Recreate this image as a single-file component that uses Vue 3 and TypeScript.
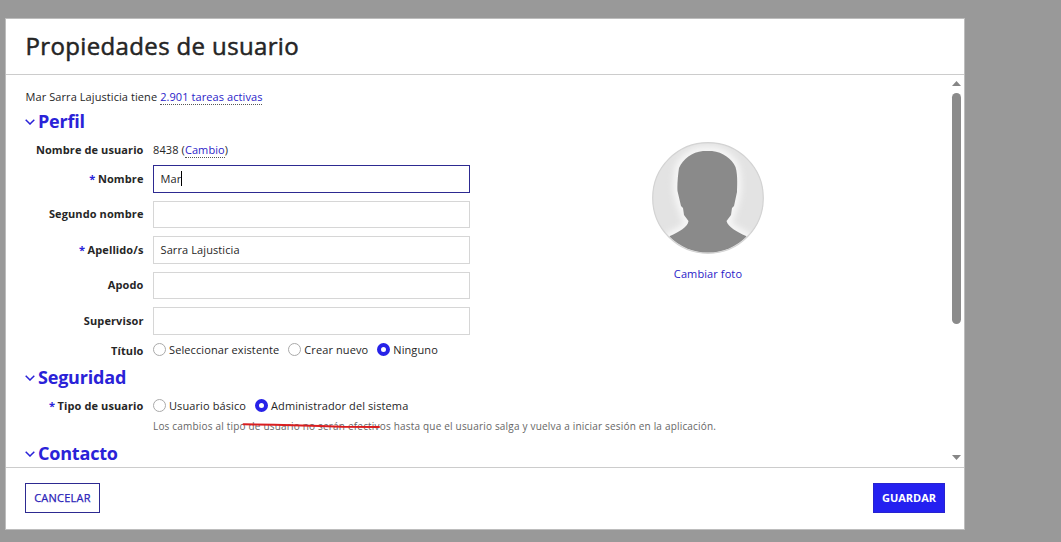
<script setup lang="ts">
import { ref } from 'vue'

interface Field {
  id: string
  label: string
  value: string
  required?: boolean
  focused?: boolean
}

const fields = ref<Field[]>([
  { id: 'nombre', label: 'Nombre', value: 'Mar', required: true, focused: true },
  { id: 'segundo', label: 'Segundo nombre', value: '' },
  { id: 'apellidos', label: 'Apellido/s', value: 'Sarra Lajusticia', required: true },
  { id: 'apodo', label: 'Apodo', value: '' },
  { id: 'supervisor', label: 'Supervisor', value: '' },
])

const titles = ['Seleccionar existente', 'Crear nuevo', 'Ninguno']
const selectedTitle = ref('Ninguno')
const userTypes = ['Usuario básico', 'Administrador del sistema']
const selectedType = ref('Administrador del sistema')
</script>

<template>
  <div class="backdrop">
    <section class="dialog" role="dialog" aria-labelledby="dialog-title">
      <header class="head"><h1 id="dialog-title">Propiedades de usuario</h1></header>

      <div class="body">
        <div class="content">
          <p class="intro">Mar Sarra Lajusticia tiene <a class="dotted">2.901 tareas activas</a></p>
          <h2 class="section perfil">
            <svg class="chev" viewBox="0 0 10 6"><path d="M.7.7 5 5 9.3.7" /></svg><span>Perfil</span>
          </h2>
          <div class="columns">
            <div class="form">
              <div class="row user">
                <span class="label">Nombre de usuario</span>
                <span class="value">8438 (<a class="dotted">Cambio</a>)</span>
              </div>
              <div v-for="f in fields" :key="f.id" class="row field">
                <span class="label"><i v-if="f.required">*</i>{{ f.label }}</span>
                <div class="input" :class="{ focused: f.focused }">
                  <span>{{ f.value }}</span><b v-if="f.focused" class="caret"></b>
                </div>
              </div>
              <div class="row radios">
                <span class="label">Título</span>
                <div class="options">
                  <label v-for="t in titles" :key="t" @click="selectedTitle = t">
                    <span class="radio" :class="{ on: selectedTitle === t }"></span><span>{{ t }}</span>
                  </label>
                </div>
              </div>
            </div>
            <div class="photo">
              <svg class="avatar" viewBox="0 0 112 112">
                <defs>
                  <clipPath id="disc"><circle cx="56" cy="56" r="54.6" /></clipPath>
                  <filter id="glow" x="-30%" y="-30%" width="160%" height="160%"><feGaussianBlur stdDeviation="3" /></filter>
                </defs>
                <circle cx="56" cy="56" r="55.5" fill="#e3e3e3" />
                <g clip-path="url(#disc)">
                  <path class="halo" d="M51 9H60C71 10 80 17 83 25 86 33 85 44 85 50L82 64 80 66 79 73 74.5 79C76 85 85 90 94 94L112 120H0L18 94C27 90 36 85 36.5 79L32 73 31 66 29 64 25.5 49C25 43 26 33 27 26 31 17 40 10 51 9Z" />
                  <path fill="#8a8a8a" d="M51 9H60C71 10 80 17 83.500 25 86 33 85 44 85 50L82 64 80 66 79 73 74.500 79C76 85 85 90 94 94L112 120H0L18 94C27 90 36 85 36.500 79L32 73 31 66 29 64 25.500 49C25 43 26 33 27 26 31 17 40 10 51 9Z" />
                </g>
                <circle cx="56" cy="56" r="55.3" fill="none" stroke="#d3d3d3" stroke-width="1.2" />
              </svg>
              <a class="change">Cambiar foto</a>
            </div>
          </div>
          <h2 class="section seguridad">
            <svg class="chev" viewBox="0 0 10 6"><path d="M.7.7 5 5 9.3.7" /></svg><span>Seguridad</span>
          </h2>
          <div class="row radios type">
            <span class="label"><i>*</i>Tipo de usuario</span>
            <div class="options">
              <label v-for="t in userTypes" :key="t" @click="selectedType = t">
                <span class="radio" :class="{ on: selectedType === t }"></span><span>{{ t }}</span>
              </label>
            </div>
          </div>
          <div class="help">
            <span>Los cambios al tipo de usuario no serán efectivos hasta que el usuario salga y vuelva a iniciar sesión en la aplicación.</span>
            <svg class="mark" viewBox="0 0 140 8"><path d="M1.500 2.300 32 2.800 78 4 100 4.800 137 5" /></svg>
          </div>
          <h2 class="section contacto">
            <svg class="chev" viewBox="0 0 10 6"><path d="M.7.7 5 5 9.3.7" /></svg><span>Contacto</span>
          </h2>
        </div>
        <div class="scroll">
          <svg viewBox="0 0 9 5"><path d="M4.5 0 9 5H0Z" /></svg>
          <div class="thumb"></div>
          <svg class="down" viewBox="0 0 9 5"><path d="M4.5 5 9 0H0Z" /></svg>
        </div>
      </div>

      <footer class="foot">
        <button class="cancel">CANCELAR</button>
        <button class="save">GUARDAR</button>
      </footer>
    </section>
  </div>
</template>

<style>
body { margin: 0; overflow: hidden; }
</style>

<style scoped>
* { box-sizing: border-box; }
.backdrop { width: 1061px; height: 542px; padding: 18px 0 0 5px; background: #999; font: 11px/16px "Open Sans", "Noto Sans", sans-serif; letter-spacing: .1px; color: #262626; }
.dialog { width: 960px; height: 512px; border: 1px solid #bdbdbd; background: #fff; display: flex; flex-direction: column; }
.head { height: 56px; flex: none; border-bottom: 1px solid #ccc; padding: 10px 0 0 19.5px; }
h1 { margin: 0; font-size: 24px; line-height: 33px; font-weight: 500; letter-spacing: .36px; -webkit-text-stroke: .5px #222; white-space: nowrap; }
.body { height: 392px; flex: none; display: flex; }
.content { width: 942px; padding: 10px 0 0 19px; overflow: hidden; }
.intro { margin: 0 0 0 .5px; height: 24px; line-height: 24px; letter-spacing: .08px; }
a { color: #2a22c8; }
.dotted { border-bottom: 1px dotted #555; line-height: 14px; }
.section { margin: 0; height: 25px; display: flex; align-items: center; font-size: 18px; line-height: 25px; font-weight: 700; letter-spacing: -.2px; color: #2a22d8; }
.perfil { margin-bottom: 1px; }
.chev { width: 10px; height: 6px; margin: 0 3px 0 0; }
.chev path { fill: none; stroke: #2a22d8; stroke-width: 1.5; }
.columns { display: flex; height: 226px; }
.form { width: 446px; }
.row { display: flex; }
.label { width: 118.5px; margin-right: 9.5px; flex: none; text-align: right; font-weight: 700; white-space: nowrap; }
.label i { font-style: normal; color: #2a22d8; margin-right: 2.5px; }
.user { height: 30px; line-height: 30px; }
.field { height: 35.5px; }
.field .label { line-height: 27px; }
.field:nth-child(odd) .label { margin-top: -.6px; }
.input { width: 317px; height: 27.5px; border: 1px solid #d6d6d6; padding-left: 6.5px; display: flex; align-items: center; }
.focused { border-color: #2d2a91; }
.caret { width: 1px; height: 15px; background: #000; }
.radios { height: 19px; line-height: 15px; }
.form .radios { margin-top: -.5px; }
.radios .label { line-height: 16px; }
.form .radios .label { line-height: 17px; }
.options { display: flex; }
.options label { display: flex; align-items: center; height: 15px; margin-right: 9px; white-space: nowrap; }
.type .options { margin-top: -.5px; }
.radio { width: 13px; height: 13px; border: 1px solid #aaa; border-radius: 50%; margin-right: 3px; }
.radio.on { border: 4.5px solid #2722e8; }
.photo { padding: 7px 0 0 181px; width: 293px; text-align: center; }
.avatar { display: block; width: 112px; height: 112px; }
.halo { fill: none; stroke: #f8f8f8; stroke-width: 8; filter: url(#glow); }
.change { display: block; margin-top: 12px; white-space: nowrap; }
.seguridad { margin-top: 4px; }
.type { margin-top: 8px; }
.help { position: relative; margin: 1px 0 0 128px; height: 20px; font-size: 10px; line-height: 16px; letter-spacing: .19px; color: #666; white-space: nowrap; }
.mark { position: absolute; left: 89px; top: 4px; width: 140px; height: 8px; }
.mark path { fill: none; stroke: #d91e20; stroke-width: 2; stroke-linecap: round; }
.contacto { margin-top: 3px; }
.scroll { width: 16px; padding: 6px 3px 0 4px; display: flex; flex-direction: column; }
.scroll svg { width: 9px; height: 5px; fill: #868686; }
.thumb { width: 9px; height: 231px; margin-top: 7px; border-radius: 5px; background: #8b8b8b; }
.scroll .down { margin-top: 131px; }
.foot { flex: 1; border-top: 1px solid #ccc; padding: 15px 19px 0 19px; display: flex; justify-content: space-between; }
button { height: 30px; padding: 0; font: 500 11px/14px "Open Sans", sans-serif; }
.cancel { width: 75px; border: 1px solid #2d2a91; background: #fff; color: #2a22b8; letter-spacing: .25px; -webkit-text-stroke: .25px #2a22b8; }
.save { width: 72px; border: 1px solid #2723cf; background: #2420f0; color: #fff; font-weight: 700; }
</style>
